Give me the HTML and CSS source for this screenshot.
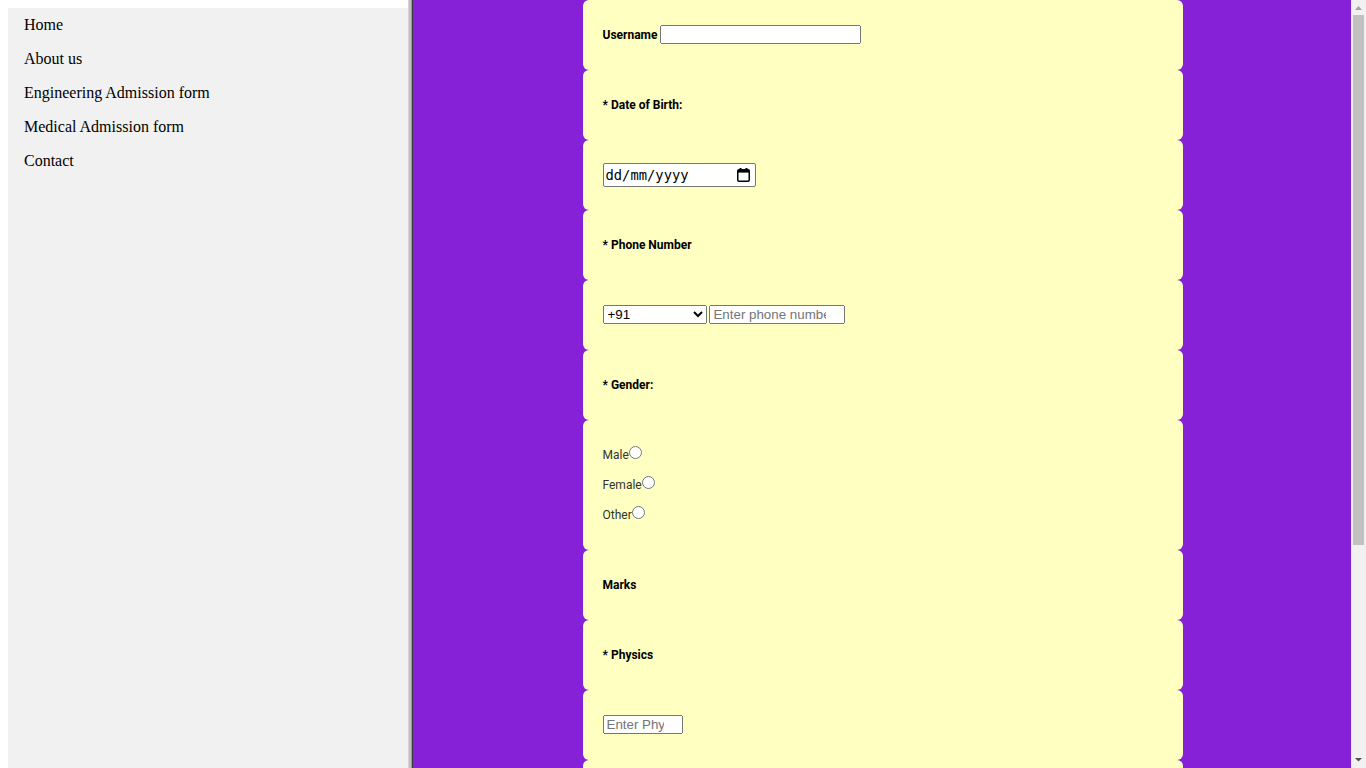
FILE: index.html
```html
<!DOCTYPE html>
<html lang="en">
<head>
<meta charset="utf-8">
<title>Admission form</title>
<link rel="stylesheet" href="styles.css">
</head>
<body>
<div class="side">
  <div class="side-frame">
    <ul class="nav">
      <li><a href="#">Home</a></li>
      <li><a href="#">About us</a></li>
      <li><a href="#">Engineering Admission form</a></li>
      <li><a href="#">Medical Admission form</a></li>
      <li><a href="#">Contact</a></li>
    </ul>
  </div>
  <div class="divider"></div>
</div>
<div class="main">
  <form class="form">
    <div class="row"><label class="lbl" for="user">Username</label> <input class="txt txt-user" id="user" type="text"></div>
    <div class="row"><span class="lbl">* Date of Birth:</span></div>
    <div class="row">
      <label class="date-field">
        <input class="date-input" type="text" placeholder="dd/mm/yyyy">
        <svg class="cal" width="13" height="14" viewBox="0 0 13 14" aria-hidden="true">
          <rect x="2.5" y="0" width="2" height="2.5" fill="#000"/>
          <rect x="8.5" y="0" width="2" height="2.5" fill="#000"/>
          <rect x="0.75" y="1.75" width="11.5" height="11.5" rx="1.2" fill="none" stroke="#000" stroke-width="1.5"/>
          <rect x="1" y="2" width="11" height="2.6" fill="#000"/>
        </svg>
      </label>
    </div>
    <div class="row"><span class="lbl">* Phone Number</span></div>
    <div class="row"><select class="code"><option>+91</option><option>+1</option><option>+44</option></select> <input class="txt txt-phone" type="number" placeholder="Enter phone number"></div>
    <div class="row"><span class="lbl">* Gender:</span></div>
    <div class="row">
      <div class="opt">Male<input class="radio" type="radio" name="g"></div>
      <div class="opt">Female<input class="radio" type="radio" name="g"></div>
      <div class="opt">Other<input class="radio" type="radio" name="g"></div>
    </div>
    <div class="row"><span class="lbl">Marks</span></div>
    <div class="row"><span class="lbl">* Physics</span></div>
    <div class="row"><input class="txt txt-mark" type="number" placeholder="Enter Physics marks"></div>
    <div class="row"><span class="lbl">* Chemistry</span></div>
    <div class="row"><input class="txt txt-mark" type="number" placeholder="Enter Chemistry marks"></div>
    <div class="row"><span class="lbl">* Mathematics</span></div>
    <div class="row"><input class="txt txt-mark" type="number" placeholder="Enter Mathematics marks"></div>
  </form>
</div>
<div class="scrollbar" aria-hidden="true">
  <div class="sb-btn">
    <svg width="15" height="15" viewBox="0 0 15 15"><polygon points="4,10 11,10 7.5,6" fill="#a3a3a3"/></svg>
  </div>
  <div class="sb-track"><div class="sb-thumb"></div></div>
  <div class="sb-btn">
    <svg width="15" height="15" viewBox="0 0 15 15"><polygon points="4,5 11,5 7.5,8.5" fill="#505050"/></svg>
  </div>
</div>
</body>
</html>
```

FILE: styles.css
```css
html, body {
  margin: 0;
}
body {
  display: flex;
  align-items: flex-start;
  background: #ffffff;
}
.side {
  position: sticky;
  top: 0;
  height: 100vh;
  display: flex;
  flex: none;
}
.side-frame {
  width: 408px;
  height: 100%;
  padding: 8px 0 0 8px;
  box-sizing: border-box;
  background: #ffffff;
}
.nav {
  list-style: none;
  margin: 0;
  padding: 0;
  height: 100%;
  background: #f1f1f1;
}
.nav a {
  display: block;
  padding: 8px 16px;
  color: #000000;
  text-decoration: none;
  font-family: "Liberation Serif", "Times New Roman", serif;
  font-size: 16px;
}
.divider {
  width: 5px;
  height: 100%;
  background: linear-gradient(to right, #d2d2d2 0 1px, #c0c0c0 1px 3px, #9a9a9a 3px 4px, #3a3a3a 4px 5px);
}
.main {
  flex: 1;
  min-height: 100vh;
  padding: 0 0 30px 1px;
  background: #8621d7;
}
.scrollbar {
  position: sticky;
  top: 0;
  flex: none;
  width: 15px;
  height: 100vh;
  display: flex;
  flex-direction: column;
  background: #f1f1f1;
}
.sb-btn {
  height: 15px;
  flex: none;
}
.sb-btn svg {
  display: block;
}
.sb-track {
  flex: 1;
}
.sb-thumb {
  height: 530px;
  margin: 0 2px;
  background: #c1c1c1;
}
.form {
  width: 600px;
  margin: 0 auto;
}
.row {
  background: #ffffc2;
  border-radius: 6px;
  padding: 20px;
  line-height: 30px;
  font-family: Roboto, "Noto Sans", sans-serif;
  font-size: 12px;
  color: #000000;
}
.lbl {
  font-weight: bold;
}
.opt {
  color: #333333;
}
.radio {
  margin: 0;
  vertical-align: baseline;
}
.txt {
  box-sizing: border-box;
  height: 19px;
  font-family: "Liberation Sans", Arial, sans-serif;
  font-size: 13.33px;
}
.txt-user { width: 201px; }
.txt-phone { width: 136px; }
.txt-mark { width: 80px; }
.code {
  box-sizing: border-box;
  width: 104px;
  height: 19px;
  font-family: "Liberation Sans", Arial, sans-serif;
  font-size: 13.33px;
}
.date-field {
  display: inline-flex;
  align-items: center;
  box-sizing: border-box;
  width: 153px;
  height: 24px;
  margin-top: -2px;
  padding: 0 5px 0 2px;
  border: 1px solid #767676;
  border-radius: 2px;
  background: #ffffff;
  vertical-align: middle;
}
.date-input {
  flex: 1;
  min-width: 0;
  border: 0;
  padding: 0;
  margin: 0;
  outline: none;
  background: transparent;
  font-family: "DejaVu Sans Mono", monospace;
  font-size: 13.8px;
  color: #000000;
}
.date-input::placeholder {
  color: #000000;
  opacity: 1;
}
.cal {
  flex: none;
}
```
